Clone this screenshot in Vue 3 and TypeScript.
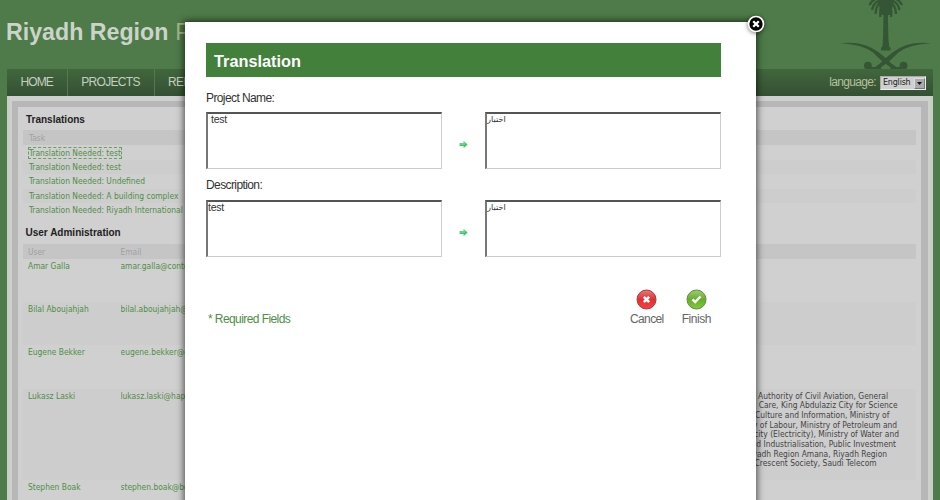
<script setup lang="ts">
import { ref } from 'vue'

interface User { name: string; email: string; height: number; lines: { text: string; start: number }[] }
interface Field { label: string; source: string; target: string; indent: boolean }

const navItems: string[] = ['HOME', 'PROJECTS', 'REPORTS']
const tasks: string[] = ['test', 'test', 'Undefined', 'A building complex', 'Riyadh International Project']
const users: User[] = [
  { name: 'Amar Galla', email: 'amar.galla@content.com', height: 43, lines: [] },
  { name: 'Bilal Aboujahjah', email: 'bilal.aboujahjah@content.com', height: 43, lines: [] },
  { name: 'Eugene Bekker', email: 'eugene.bekker@content.com', height: 44, lines: [] },
  {
    name: 'Lukasz Laski', email: 'lukasz.laski@happy.com', height: 91,
    lines: [
      { text: 'Authority of Civil Aviation, General', start: 9 },
      { text: 'n Care, King Abdulaziz City for Science', start: 2.5 },
      { text: 'Culture and Information, Ministry of', start: 6 },
      { text: 'y of Labour, Ministry of Petroleum and', start: 4 },
      { text: 'icity (Electricity), Ministry of Water and', start: 3 },
      { text: 'nd Industrialisation, Public Investment', start: 2.5 },
      { text: 'yadh Region Amana, Riyadh Region', start: 3.5 },
      { text: 'Crescent Society, Saudi Telecom', start: 5.5 }
    ]
  },
  { name: 'Stephen Boak', email: 'stephen.boak@boak.com', height: 43, lines: [] }
]
const fields = ref<Field[]>([
  { label: 'Project Name:', source: 'test', target: 'اختبار', indent: true },
  { label: 'Description:', source: 'test', target: 'اختبار', indent: false }
])
</script>

<template>
  <div class="screen">
    <div class="page">
      <header class="header">
        <h1 class="logo"><b>Riyadh Region</b><span>Projects</span></h1>
        <svg class="emblem" width="92" height="69" viewBox="840 0 92 69">
          <g fill="#355635">
            <path d="M883.600 12h4.200l.6 27 .8 7.500 1.400 1.300v2.700h-9.600v-2.700l1.400-1.300.6-7.500z" />
            <path d="M840.500 43.200q9-1.200 18 .3 14 2.500 26 13.500l7 6.500 9.500 7h-6l-12-8.500q-5-4.500-10-9.500-11-8.500-32.500-9.300z" />
            <path d="M840.500 43.200q9-1.200 18 .3 14 2.500 26 13.500l7 6.500 9.500 7h-6l-12-8.500q-5-4.500-10-9.500-11-8.500-32.500-9.300z" transform="matrix(-1 0 0 1 1771.400 0)" />
            <circle cx="867.900" cy="65.600" r="3.900" /><circle cx="903.500" cy="65.600" r="3.900" />
            <path d="M869 67h12v2h-12zM890.500 67h12v2h-12z" />
            <path d="M877-1h17.500l-2 8-2 8h-9l-2-8z" />
          </g>
          <g fill="none" stroke="#355635" stroke-width="2.200">
            <path d="M884-2q-11-1-14.500 7M884 0q-10 0-12 10M884 1q-8 2-8.500 13M884 2q-5 5-3.500 15M887.500-2q11-1 14.500 7M887.500 0q10 0 12 10M887.500 1q8 2 8.500 13M887.500 2q5 5 3.500 15" />
          </g>
        </svg>
      </header>

      <nav class="nav">
        <a v-for="item in navItems" :key="item">{{ item }}</a>
        <div class="language">
          <span>language:</span>
          <div class="select">English<i><svg width="5" height="3" viewBox="0 0 5 3"><path d="M0 0h5L2.500 3z" fill="#111" /></svg></i></div>
        </div>
      </nav>

      <div class="frame">
        <main class="content">
          <h2>Translations</h2>
          <div class="thead">Task</div>
          <div v-for="(task, i) in tasks" :key="i" class="task">
            <a :class="{ focused: i === 0 }">Translation Needed: {{ task }}</a>
          </div>
          <h2 class="second">User Administration</h2>
          <div class="thead user-grid"><span>User</span><span>Email</span></div>
          <div v-for="user in users" :key="user.name" class="user user-grid" :style="{ height: user.height + 'px' }">
            <a>{{ user.name }}</a>
            <a class="email">{{ user.email }}</a>
            <div class="agencies">
              <p v-for="line in user.lines" :key="line.text" :style="{ paddingLeft: line.start + 'px' }">{{ line.text }}</p>
            </div>
          </div>
        </main>
      </div>
    </div>

    <section class="modal">
      <svg class="close" width="20" height="20" viewBox="0 0 20 20">
        <circle cx="10" cy="10" r="7.500" fill="#000" stroke="#fff" stroke-width="1.700" />
        <path d="M7.200 7.200l5.600 5.600M12.800 7.200l-5.600 5.600" stroke="#fff" stroke-width="2.300" />
      </svg>
      <h3>Translation</h3>
      <div v-for="field in fields" :key="field.label" class="field">
        <label>{{ field.label }}</label>
        <div class="pair">
          <textarea v-model="field.source" :class="{ indent: field.indent }" spellcheck="false"></textarea>
          <svg class="arrow" width="9" height="9" viewBox="0 0 9 9">
            <path d="M.5 3h4V.7L8.700 4.500 4.500 8.300V6h-4z" fill="#5bdc80" />
            <path d="M1 5h5V3l2 1.500-3 3V5.700H1z" fill="#25ad4b" opacity=".6" />
          </svg>
          <textarea v-model="field.target" class="arabic" spellcheck="false"></textarea>
        </div>
      </div>
      <footer class="foot">
        <span class="required">* Required Fields</span>
        <div class="actions">
          <div class="action">
            <svg width="21" height="21" viewBox="0 0 21 21">
              <defs><linearGradient id="red" x2="0" y2="1"><stop stop-color="#e77b78" /><stop offset=".5" stop-color="#e22f32" /><stop offset="1" stop-color="#fb4146" /></linearGradient></defs>
              <circle cx="10.500" cy="10.500" r="9.500" fill="url(#red)" stroke="#a63a3c" stroke-width="1" />
              <path d="M7.800 7.800l5.400 5.400M13.200 7.800l-5.400 5.400" stroke="#fff" stroke-width="2.600" />
            </svg>
            <span>Cancel</span>
          </div>
          <div class="action">
            <svg width="21" height="21" viewBox="0 0 21 21">
              <defs><linearGradient id="green" x2="0" y2="1"><stop stop-color="#a3ca79" /><stop offset=".5" stop-color="#65ae2c" /><stop offset="1" stop-color="#83ca3b" /></linearGradient></defs>
              <circle cx="10.500" cy="10.500" r="9.500" fill="url(#green)" stroke="#628d3f" stroke-width="1" />
              <path d="M6.500 10.300l2.700 2.700 5.300-5.500" fill="none" stroke="#fff" stroke-width="2.500" />
            </svg>
            <span>Finish</span>
          </div>
        </div>
      </footer>
    </section>
  </div>
</template>

<style>
body { margin: 0; overflow: hidden; }
</style>

<style scoped>
* { box-sizing: border-box; }
h1, h2, h3, p { margin: 0; }
.screen { position: relative; width: 940px; height: 500px; overflow: hidden; background: #4e7b49; font-family: "Liberation Sans", Arial, sans-serif; }
.page { padding: 0 7px; }
.header { height: 69px; display: flex; justify-content: space-between; overflow: hidden; }
.logo { display: flex; gap: 7px; margin-left: -1px; padding-top: 19px; font-size: 23.200px; line-height: 27px; font-weight: 400; color: #cbd4c8; white-space: nowrap; }
.logo span { color: #a6b586; }
.emblem { flex: none; margin-right: 1px; }
.nav { height: 27px; display: flex; background: linear-gradient(#41673d, #355033); color: #c5cec1; font-size: 12px; line-height: 27px; letter-spacing: -0.700px; }
.nav a { padding: 0 13.900px 0 13.500px; border-right: 1px solid #55784f; }
.nav a:first-child { letter-spacing: -0.900px; }
.language { margin-left: auto; display: flex; align-items: center; gap: 4px; padding-right: 7px; color: #b4c09c; letter-spacing: -0.650px; }
.select { display: flex; align-items: center; justify-content: space-between; width: 46px; height: 14px; margin-top: 1px; padding-left: 2px; border: 1px solid #aaa; border-right-color: #eee; border-bottom-color: #eee; background: #d0d0d0; color: #222; font-family: "DejaVu Sans", sans-serif; font-size: 8px; line-height: 12px; letter-spacing: -0.200px; }
.select i { display: flex; align-items: center; justify-content: center; width: 11px; height: 11px; border: 1px solid #777; border-left-color: #ddd; border-top-color: #ddd; background: #aaa; }
.frame { height: 420px; padding: 5px 5px 0; background: linear-gradient(90deg, #c7cec5 0 2px, #cfcfcf 3px 923px, #c3d0c2 924px); }
.content { height: 415px; border: solid #b7b7b7; border-width: 6px 7px 0 6px; padding: 0 5px; background: #d0d0d0; font-family: "DejaVu Sans Condensed", "DejaVu Sans", sans-serif; font-stretch: condensed; font-size: 8.400px; color: #4b4b4b; }
h2 { height: 23px; padding: 2px 0 0 3px; font-family: "Liberation Sans", Arial, sans-serif; font-size: 10px; line-height: 21px; color: #222; }
h2.second { height: 26px; padding: 4px 0 0 2.500px; }
.thead { height: 15px; padding: 0 6px; background: #c5c5c5; color: #a1a1a1; line-height: 17px; }
.task { height: 14.500px; padding-left: 6px; line-height: 15px; color: #4f8e46; white-space: nowrap; }
.task:nth-of-type(2) { line-height: 16px; }
.task:nth-of-type(odd) { background: #cdcdcd; }
.focused { outline: 1px dashed #67a15e; }
.user-grid { display: grid; grid-template-columns: 92.500px 628.500px 1fr; padding-left: 5px; }
.user { color: #4f8e46; line-height: 15px; overflow: hidden; }
.user:nth-of-type(odd) { background: #cdcdcd; }
.email { overflow: hidden; }
.agencies { padding-top: 3px; color: #444; }
.agencies p { line-height: 9.700px; white-space: nowrap; }
.modal { position: absolute; left: 185px; top: 22px; width: 571px; height: 490px; padding: 21px 35px 0 21px; background: #fff; box-shadow: 0 0 7px 1px rgba(0, 0, 0, 0.65); color: #333; }
.close { position: absolute; right: -10px; top: -8px; filter: drop-shadow(0 1px 2px rgba(0, 0, 0, 0.5)); }
h3 { height: 34px; padding-left: 8px; background: #43803c; color: #fff; font-size: 16.300px; line-height: 36px; }
.field { padding-top: 11px; height: 91.500px; }
.field + .field { height: 88.500px; padding-top: 7px; }
label { display: block; height: 24px; font-size: 12px; line-height: 20px; letter-spacing: -0.600px; }
.field + .field label { line-height: 19px; }
.pair { display: flex; align-items: center; justify-content: space-between; }
.arrow { margin-top: 8px; }
textarea { width: 236px; height: 57px; margin: 0; padding: 0; border: 1px solid #ccc; border-top: 2px solid #555; border-left: 2px solid #777; resize: none; outline: none; overflow: hidden; background: #fff; color: #333; font: 10.500px/10px "Liberation Sans", Arial, sans-serif; letter-spacing: -0.250px; }
textarea.indent { padding-left: 3px; }
textarea.arabic { font-family: "DejaVu Sans", sans-serif; font-size: 8.200px; line-height: 11px; letter-spacing: 0; }
.foot { display: flex; justify-content: space-between; padding: 32px 10px 0 2px; font-size: 12px; letter-spacing: -0.600px; }
.required { padding-top: 22px; line-height: 16px; letter-spacing: -0.580px; color: #4f8e46; }
.actions { display: flex; gap: 18px; }
.action { display: flex; flex-direction: column; align-items: center; color: #666; line-height: 16px; }
.action svg { margin-bottom: 1px; }
.action + .action { letter-spacing: -0.450px; }
</style>
